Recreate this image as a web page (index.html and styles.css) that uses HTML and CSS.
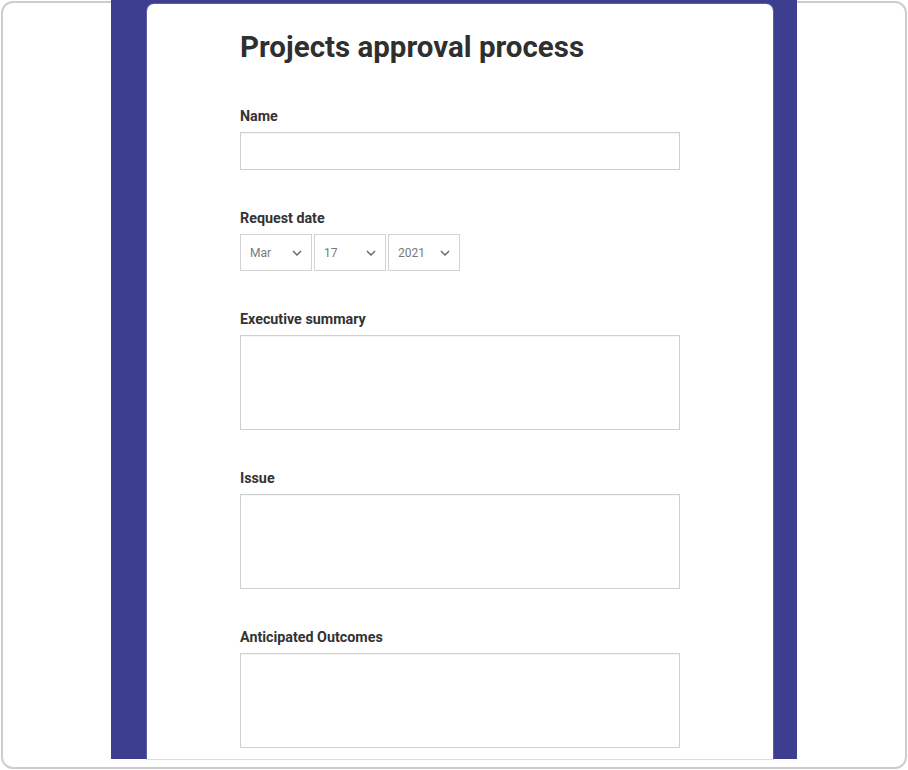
FILE: index.html
```html
<!DOCTYPE html>
<html lang="en">
<head>
<meta charset="utf-8">
<title>Projects approval process</title>
<link rel="stylesheet" href="styles.css">
</head>
<body>
<div class="frame">
  <div class="band">
    <div class="card">
      <form class="form">
        <h1 class="title">Projects approval process</h1>
        <div class="fields">
          <div class="field">
            <label class="label">Name</label>
            <div class="input"></div>
          </div>
          <div class="field">
            <label class="label">Request date</label>
            <div class="selects">
              <div class="select"><span>Mar</span><svg class="chev" width="10" height="6" viewBox="0 0 10 6"><path d="M1 1 L5 5 L9 1" fill="none" stroke="#6b6b6b" stroke-width="1.5"/></svg></div>
              <div class="select"><span>17</span><svg class="chev" width="10" height="6" viewBox="0 0 10 6"><path d="M1 1 L5 5 L9 1" fill="none" stroke="#6b6b6b" stroke-width="1.5"/></svg></div>
              <div class="select"><span>2021</span><svg class="chev" width="10" height="6" viewBox="0 0 10 6"><path d="M1 1 L5 5 L9 1" fill="none" stroke="#6b6b6b" stroke-width="1.5"/></svg></div>
            </div>
          </div>
          <div class="field">
            <label class="label">Executive summary</label>
            <div class="textarea"></div>
          </div>
          <div class="field">
            <label class="label">Issue</label>
            <div class="textarea"></div>
          </div>
          <div class="field">
            <label class="label">Anticipated Outcomes</label>
            <div class="textarea"></div>
          </div>
        </div>
      </form>
    </div>
  </div>
</div>
</body>
</html>
```

FILE: styles.css
```css
* { box-sizing: border-box; }
html, body {
  margin: 0;
  padding: 0;
  background: #ffffff;
}
body {
  font-family: Roboto, "Liberation Sans", Arial, sans-serif;
  color: #333;
}
.frame {
  margin: 1px;
  width: 906px;
  height: 768px;
  border: 2px solid #cdcdcd;
  border-radius: 12px;
  background: #fff;
  display: flex;
  flex-direction: column;
}
.band {
  margin: -3px 0 0 108px;
  width: 686px;
  height: 759px;
  background: #3d3e8f;
  padding: 4px 24px 0 36px;
  display: flex;
}
.card {
  flex: 1;
  background: #fff;
  border-radius: 7px 7px 0 0;
  box-shadow: 0 0 0 1px rgba(150, 150, 230, 0.35);
  padding: 27px 0 0 93px;
}
.form {
  width: 440px;
  margin: 0;
}
.title {
  margin: 0 0 44px 0;
  font-size: 29.5px;
  font-weight: 700;
  line-height: 33px;
  color: #2f2f2f;
  letter-spacing: 0;
}
.fields {
  display: flex;
  flex-direction: column;
  gap: 40px;
}
.field {
  display: flex;
  flex-direction: column;
  gap: 8px;
}
.label {
  font-size: 14.3px;
  font-weight: 700;
  line-height: 16px;
  color: #333;
}
.input {
  height: 38px;
  border: 1px solid #cfcfcf;
  box-shadow: inset 0 1px 1px rgba(0,0,0,0.04);
  background: #fff;
}
.textarea {
  height: 95px;
  border: 1px solid #cfcfcf;
  box-shadow: inset 0 1px 1px rgba(0,0,0,0.04);
  background: #fff;
}
.selects {
  display: flex;
  gap: 2px;
}
.select {
  width: 72px;
  height: 37px;
  border: 1px solid #d3d3d3;
  display: flex;
  align-items: center;
  justify-content: space-between;
  padding: 0 9px 0 9px;
  font-size: 12px;
  color: #7a7a7a;
}
.chev {
  display: block;
}
```
